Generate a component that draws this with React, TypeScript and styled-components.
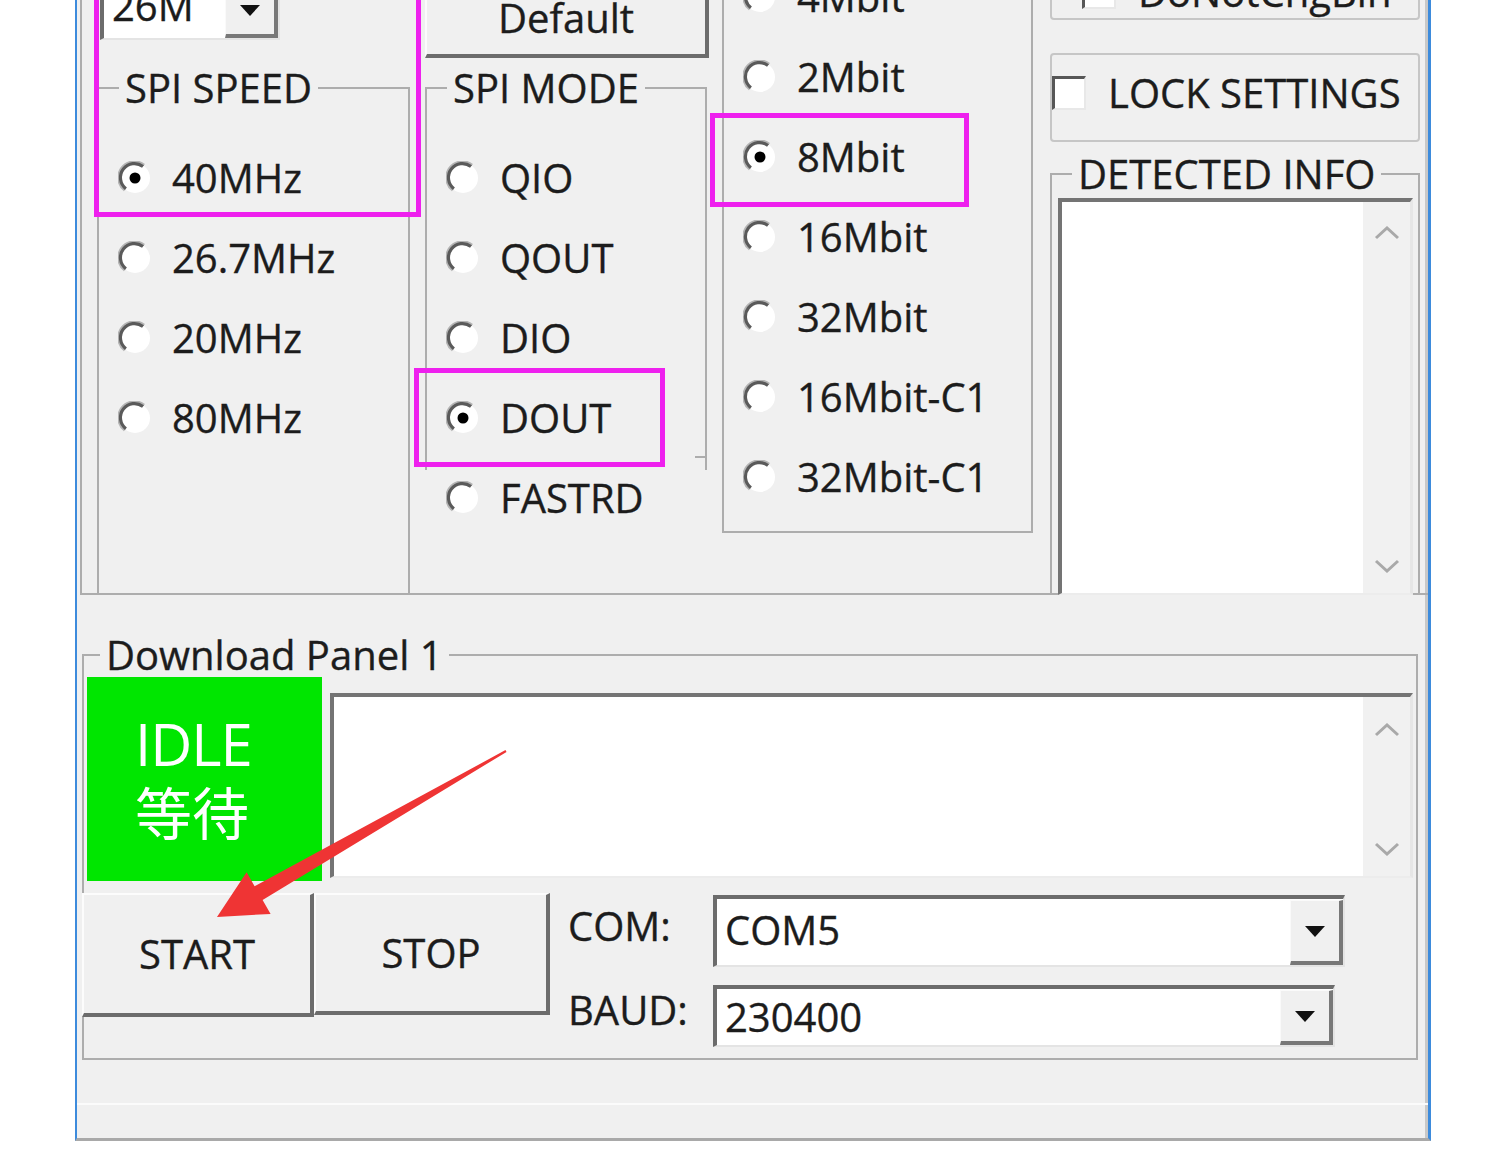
import React from 'react';
import styled, { createGlobalStyle } from 'styled-components';

const GlobalStyle = createGlobalStyle`
  html, body {
    margin: 0;
    padding: 0;
    background: #fff;
  }
  body {
    font-family: 'Open Sans', 'Noto Sans CJK SC', sans-serif;
    color: #1c1c1c;
    -webkit-text-stroke: 0.35px currentColor;
  }
`;

const LINE = '#adadad';
const DARK = '#6c6c6c';

const Page = styled.div`
  position: relative;
  width: 1500px;
  height: 1166px;
  overflow: hidden;
  background: #fff;
`;

const Window = styled.div`
  box-sizing: border-box;
  margin-left: 75px;
  width: 1356px;
  height: 1141px;
  display: flex;
  flex-direction: column;
  overflow: hidden;
  background: #f0f0f0;
  border-left: 2px solid #3d8bdc;
  border-right: 3px solid #3d8bdc;
  border-bottom: 3px solid #a9a9a9;
  box-shadow: inset -3px 0 0 #c8c8c8;
`;

/* ---------- top settings panel ---------- */

const TopPanel = styled.div`
  box-sizing: border-box;
  flex: none;
  display: flex;
  height: 705px;
  margin: -110px 0 0 3px;
  padding-left: 15px;
  border-left: 2px solid ${LINE};
  border-bottom: 2px solid ${LINE};
`;

const Column = styled.div<{ $width: number; $gap?: number }>`
  display: flex;
  flex-direction: column;
  flex: none;
  width: ${p => p.$width}px;
  margin-left: ${p => p.$gap ?? 0}px;
`;

const Group = styled.fieldset<{ $width: number; $height?: number; $open?: boolean; $top: number }>`
  position: relative;
  box-sizing: border-box;
  flex: none;
  margin: ${p => p.$top}px 0 0 0;
  padding: 0;
  min-width: 0;
  width: ${p => p.$width}px;
  ${p => (p.$height ? `height: ${p.$height}px;` : '')}
  border: 2px solid ${LINE};
  ${p => (p.$open ? 'border-bottom: none;' : '')}
`;

const HookedGroup = styled(Group)`
  &::after {
    content: '';
    position: absolute;
    right: -2px;
    bottom: 0;
    width: 12px;
    height: 2px;
    background: ${LINE};
  }
`;

const Legend = styled.legend<{ $indent: number; $size?: number }>`
  margin-left: ${p => p.$indent}px;
  padding: 0 6px;
  font-size: ${p => p.$size ?? 40}px;
  line-height: 44px;
  white-space: nowrap;
`;

const RadioList = styled.div<{ $padTop: number; $padBottom?: number }>`
  display: flex;
  flex-direction: column;
  padding: ${p => p.$padTop}px 0 ${p => p.$padBottom ?? 0}px 0;
`;

const RadioRow = styled.div<{ $h?: number; $indent?: number }>`
  display: flex;
  align-items: center;
  gap: 20px;
  height: ${p => p.$h ?? 80}px;
  padding-left: ${p => p.$indent ?? 19}px;
  font-size: 40px;
  line-height: 44px;
  white-space: nowrap;
`;

const RadioSvg = styled.svg`
  flex: none;
  width: 34px;
  height: 34px;
`;

function Radio({ label, checked, h, indent }: { label: string; checked?: boolean; h?: number; indent?: number }) {
  return (
    <RadioRow $h={h} $indent={indent}>
      <RadioSvg viewBox="0 0 34 34">
        <circle cx="17" cy="17" r="15" fill="#fff" />
        <path d="M 26.2 3.9 A 16 16 0 0 0 6.7 29.3" stroke="#b4b4b4" strokeWidth="2.5" fill="none" />
        <path d="M 25.0 5.5 A 14 14 0 0 0 7.9 27.7" stroke="#5a5a5a" strokeWidth="3.2" fill="none" />
        {checked && <circle cx="17" cy="17" r="5.5" fill="#000" />}
      </RadioSvg>
      <span>{label}</span>
    </RadioRow>
  );
}

/* ---------- combo boxes ---------- */

const Combo = styled.div<{ $width: number; $height: number; $top?: number; $left?: number }>`
  box-sizing: border-box;
  flex: none;
  display: flex;
  width: ${p => p.$width}px;
  height: ${p => p.$height}px;
  margin: ${p => p.$top ?? 0}px 0 0 ${p => p.$left ?? 0}px;
  background: #fff;
  border-top: 4px solid ${DARK};
  border-left: 4px solid ${DARK};
  border-right: 2px solid #e4e4e4;
  border-bottom: 2px solid #e4e4e4;
`;

const ComboText = styled.div<{ $lift?: number }>`
  flex: 1;
  display: flex;
  align-items: center;
  padding: 0 0 ${p => p.$lift ?? 0}px 8px;
  font-size: 40px;
  line-height: 44px;
  white-space: nowrap;
`;

const DropButton = styled.div`
  box-sizing: border-box;
  flex: none;
  width: 53px;
  margin-top: 1px;
  display: flex;
  align-items: center;
  justify-content: center;
  background: #f0f0f0;
  border-top: 1px solid #fafafa;
  border-left: 1px solid #fafafa;
  border-right: 4px solid #787878;
  border-bottom: 4px solid #787878;
`;

function Dropdown({ value, width, height, top, left, lift }: { value: string; width: number; height: number; top?: number; left?: number; lift?: number }) {
  return (
    <Combo $width={width} $height={height} $top={top} $left={left}>
      <ComboText $lift={lift}>{value}</ComboText>
      <DropButton>
        <svg width="20" height="11" viewBox="0 0 20 11">
          <polygon points="0,0 20,0 10,11" fill="#111" />
        </svg>
      </DropButton>
    </Combo>
  );
}

/* ---------- buttons, checkboxes ---------- */

const PushButton = styled.div<{ $width: number; $height: number; $top?: number; $left?: number }>`
  box-sizing: border-box;
  flex: none;
  display: flex;
  align-items: center;
  justify-content: center;
  width: ${p => p.$width}px;
  height: ${p => p.$height}px;
  margin: ${p => p.$top ?? 0}px 0 0 ${p => p.$left ?? 0}px;
  background: #f0f0f0;
  border-top: 2px solid #fcfcfc;
  border-left: 2px solid #fcfcfc;
  border-right: 4px solid ${DARK};
  border-bottom: 4px solid ${DARK};
  font-size: 40px;
  line-height: 44px;
`;

const OptionBox = styled.div<{ $height: number; $top: number; $lift?: number }>`
  box-sizing: border-box;
  flex: none;
  display: flex;
  align-items: center;
  height: ${p => p.$height}px;
  margin-top: ${p => p.$top}px;
  padding-bottom: ${p => p.$lift ?? 0}px;
  border: 2px solid #c6c6c6;
  border-radius: 4px;
  font-size: 40px;
  line-height: 44px;
  white-space: nowrap;
`;

const CheckSquare = styled.span<{ $left: number }>`
  box-sizing: border-box;
  flex: none;
  width: 34px;
  height: 34px;
  margin: 0 22px 0 ${p => p.$left}px;
  background: #fff;
  border-top: 3px solid #575757;
  border-left: 3px solid #575757;
  border-right: 2px solid #e8e8e8;
  border-bottom: 2px solid #e8e8e8;
`;

/* ---------- scrolling text areas ---------- */

const TextArea = styled.div<{ $width: number; $height: number; $top: number; $left: number }>`
  box-sizing: border-box;
  flex: none;
  display: flex;
  width: ${p => p.$width}px;
  height: ${p => p.$height}px;
  margin: ${p => p.$top}px 0 0 ${p => p.$left}px;
  background: #fff;
  border-top: 4px solid #747474;
  border-left: 4px solid #747474;
  border-right: 3px solid #e6e6e6;
  border-bottom: 2px solid #ececec;
`;

const TextBody = styled.div`
  flex: 1;
`;

const ScrollTrack = styled.div<{ $padTop: number; $padBottom: number }>`
  flex: none;
  width: 47px;
  display: flex;
  flex-direction: column;
  align-items: center;
  justify-content: space-between;
  padding: ${p => p.$padTop}px 0 ${p => p.$padBottom}px;
  background: #f1f1f1;
`;

function Chevron({ down }: { down?: boolean }) {
  return (
    <svg width="26" height="14" viewBox="0 0 26 14">
      <polyline points={down ? '2,2 13,12 24,2' : '2,12 13,2 24,12'} stroke="#a9a9a9" strokeWidth="3" fill="none" />
    </svg>
  );
}

/* ---------- download panel ---------- */

const BottomGroup = styled.fieldset`
  box-sizing: border-box;
  flex: none;
  margin: 38px 0 0 5px;
  padding: 0;
  min-width: 0;
  width: 1336px;
  height: 427px;
  border: 2px solid ${LINE};
`;

const PanelRow = styled.div<{ $top?: number; $height: number }>`
  display: flex;
  align-items: flex-start;
  height: ${p => p.$height}px;
  margin-top: ${p => p.$top ?? 0}px;
`;

const StateBox = styled.div`
  box-sizing: border-box;
  flex: none;
  width: 235px;
  height: 204px;
  margin-left: 3px;
  padding: 0 0 4px 48px;
  display: flex;
  flex-direction: column;
  justify-content: center;
  background: #00e600;
  color: #fff;
  -webkit-text-stroke: 0;
`;

const StateLatin = styled.span`
  font-size: 58px;
  line-height: 66px;
  letter-spacing: -1px;
`;

const StateCjk = styled.span`
  font-family: 'Noto Sans CJK SC', sans-serif;
  font-size: 57px;
  line-height: 66px;
  font-weight: 400;
`;

const PortGrid = styled.div`
  display: grid;
  grid-template-columns: 145px auto;
  grid-template-rows: 72px 62px;
  row-gap: 18px;
  margin: 2px 0 0 18px;
`;

const PortLabel = styled.div<{ $top: number }>`
  margin-top: ${p => p.$top}px;
  font-size: 40px;
  line-height: 44px;
`;

const StatusStrip = styled.div`
  flex: none;
  height: 43px;
`;

const StatusBar = styled.div`
  flex: 1;
  border-top: 2px solid #fbfbfb;
`;

/* ---------- overlays (annotations on the screenshot) ---------- */

const Highlight = styled.div<{ $x: number; $y: number; $w: number; $h: number }>`
  position: absolute;
  left: ${p => p.$x}px;
  top: ${p => p.$y}px;
  width: ${p => p.$w}px;
  height: ${p => p.$h}px;
  box-sizing: border-box;
  border: 5px solid #ee20ee;
  pointer-events: none;
`;

const ArrowLayer = styled.svg`
  position: absolute;
  left: 0;
  top: 0;
  width: 1500px;
  height: 1166px;
  pointer-events: none;
`;

export default function App() {
  return (
    <Page>
      <GlobalStyle />
      <Window>
        <TopPanel>
          <Column $width={313}>
            <Dropdown value="26M" width={180} height={60} top={90} left={3} lift={10} />
            <Group $width={313} $height={527} $top={26} $open>
              <Legend $indent={20}>SPI SPEED</Legend>
              <RadioList $padTop={28}>
                <Radio label="40MHz" checked />
                <Radio label="26.7MHz" />
                <Radio label="20MHz" />
                <Radio label="80MHz" />
              </RadioList>
            </Group>
          </Column>

          <Column $width={285} $gap={15}>
            <PushButton $width={284} $height={78} $top={90}>Default</PushButton>
            <HookedGroup $width={282} $height={404} $top={8} $open>
              <Legend $indent={20}>SPI MODE</Legend>
              <RadioList $padTop={28}>
                <Radio label="QIO" />
                <Radio label="QOUT" />
                <Radio label="DIO" />
                <Radio label="DOUT" checked />
              </RadioList>
            </HookedGroup>
            <Radio label="FASTRD" h={56} indent={21} />
          </Column>

          <Column $width={311} $gap={12}>
            <Group $width={311} $top={10}>
              <Legend $indent={20}>FLASH SIZE</Legend>
              <RadioList $padTop={13} $padBottom={14}>
                <Radio label="4Mbit" />
                <Radio label="2Mbit" />
                <Radio label="8Mbit" checked />
                <Radio label="16Mbit" />
                <Radio label="32Mbit" />
                <Radio label="16Mbit-C1" />
                <Radio label="32Mbit-C1" />
              </RadioList>
            </Group>
          </Column>

          <Column $width={370} $gap={17}>
            <OptionBox $height={56} $top={74}>
              <CheckSquare $left={30} />
              DoNotChgBin
            </OptionBox>
            <OptionBox $height={89} $top={33} $lift={10}>
              <CheckSquare $left={0} />
              LOCK SETTINGS
            </OptionBox>
            <Group $width={370} $height={441} $top={10} $open>
              <Legend $indent={20}>DETECTED INFO</Legend>
              <TextArea $width={355} $height={397} $top={2} $left={6}>
                <TextBody />
                <ScrollTrack $padTop={24} $padBottom={20}>
                  <Chevron />
                  <Chevron down />
                </ScrollTrack>
              </TextArea>
            </Group>
          </Column>
        </TopPanel>

        <BottomGroup>
          <Legend $indent={16} $size={40}>Download Panel 1</Legend>
          <PanelRow $height={204}>
            <StateBox>
              <StateLatin>IDLE</StateLatin>
              <StateCjk>等待</StateCjk>
            </StateBox>
            <TextArea $width={1083} $height={185} $top={16} $left={8}>
              <TextBody />
              <ScrollTrack $padTop={26} $padBottom={20}>
                <Chevron />
                <Chevron down />
              </ScrollTrack>
            </TextArea>
          </PanelRow>
          <PanelRow $top={12} $height={165}>
            <PushButton $width={232} $height={124} $left={-2}>START</PushButton>
            <PushButton $width={236} $height={122}>STOP</PushButton>
            <PortGrid>
              <PortLabel $top={9}>COM:</PortLabel>
              <Dropdown value="COM5" width={632} height={72} lift={4} />
              <PortLabel $top={3}>BAUD:</PortLabel>
              <Dropdown value="230400" width={622} height={62} />
            </PortGrid>
          </PanelRow>
        </BottomGroup>

        <StatusStrip />
        <StatusBar />
      </Window>

      <Highlight $x={94} $y={-10} $w={327} $h={227} />
      <Highlight $x={414} $y={368} $w={251} $h={99} />
      <Highlight $x={710} $y={113} $w={259} $h={94} />

      <ArrowLayer viewBox="0 0 1500 1166">
        <polygon
          points="505.5,750.1 254.6,886.2 246.6,872.3 217,917 270.6,913.9 262.6,900 506.5,751.9"
          fill="#ef3434"
        />
      </ArrowLayer>
    </Page>
  );
}
